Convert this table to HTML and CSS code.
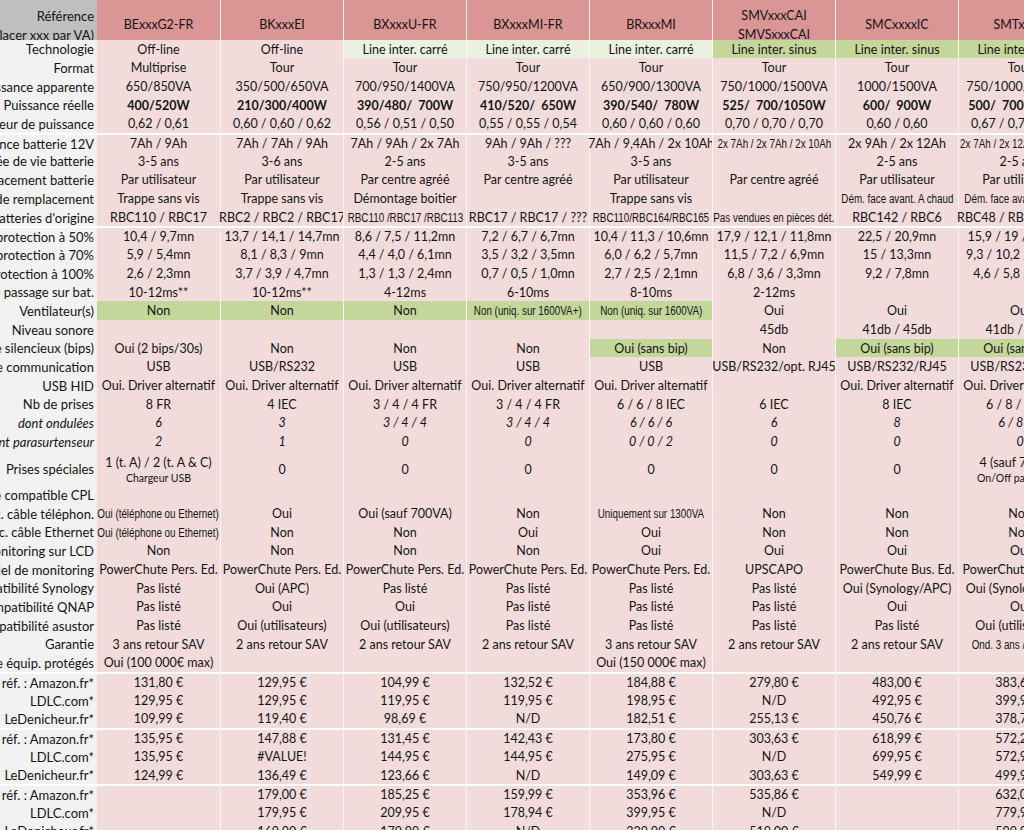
FILE: index.html
```html
<!DOCTYPE html>
<html lang="fr">
<head>
<meta charset="utf-8">
<title>Comparatif onduleurs APC</title>
<link rel="stylesheet" href="styles.css">
</head>
<body>
<div class="sheet">
  <div class="row head">
    <div class="lab"><span>Référence</span><span>(remplacer xxx par VA)</span></div>
    <div>BExxxG2-FR</div><div>BKxxxEI</div><div>BXxxxU-FR</div><div>BXxxxMI-FR</div><div>BRxxxMI</div>
    <div><span>SMVxxxCAI</span><span>SMVSxxxCAI</span></div><div>SMCxxxxIC</div><div>SMTxxxxI</div>
  </div>

  <div class="row">
    <div class="lab"><span>Technologie</span></div>
    <div>Off-line</div><div>Off-line</div><div class="lg">Line inter. carré</div><div class="lg">Line inter. carré</div><div class="lg">Line inter. carré</div><div class="g">Line inter. sinus</div><div class="g">Line inter. sinus</div><div class="g">Line inter. sinus</div>
  </div>
  <div class="row">
    <div class="lab"><span>Format</span></div>
    <div>Multiprise</div><div>Tour</div><div>Tour</div><div>Tour</div><div>Tour</div><div>Tour</div><div>Tour</div><div>Tour</div>
  </div>
  <div class="row">
    <div class="lab"><span>Puissance apparente</span></div>
    <div>650/850VA</div><div>350/500/650VA</div><div>700/950/1400VA</div><div>750/950/1200VA</div><div>650/900/1300VA</div><div>750/1000/1500VA</div><div>1000/1500VA</div><div>750/1000/1500VA</div>
  </div>
  <div class="row b">
    <div class="lab"><span>Puissance réelle</span></div>
    <div>400/520W</div><div>210/300/400W</div><div>390/480/  700W</div><div>410/520/  650W</div><div>390/540/  780W</div><div>525/  700/1050W</div><div>600/  900W</div><div>500/  700/1000W</div>
  </div>
  <div class="row">
    <div class="lab"><span>Facteur de puissance</span></div>
    <div>0,62 / 0,61</div><div>0,60 / 0,60 / 0,62</div><div>0,56 / 0,51 / 0,50</div><div>0,55 / 0,55 / 0,54</div><div>0,60 / 0,60 / 0,60</div><div>0,70 / 0,70 / 0,70</div><div>0,60 / 0,60</div><div>0,67 / 0,70 / 0,67</div>
  </div>

  <div class="row sep">
    <div class="lab"><span>Puissance batterie 12V</span></div>
    <div>7Ah / 9Ah</div><div>7Ah / 7Ah / 9Ah</div><div>7Ah / 9Ah / 2x 7Ah</div><div>9Ah / 9Ah / ???</div><div>7Ah / 9,4Ah / 2x 10Ah</div><div><span class="n">2x 7Ah / 2x 7Ah / 2x 10Ah</span></div><div>2x 9Ah / 2x 12Ah</div><div><span class="n">2x 7Ah / 2x 12Ah / 2x 12Ah</span></div>
  </div>
  <div class="row">
    <div class="lab"><span>Durée de vie batterie</span></div>
    <div>3-5 ans</div><div>3-6 ans</div><div>2-5 ans</div><div>3-5 ans</div><div>3-5 ans</div><div></div><div>2-5 ans</div><div>2-5 ans</div>
  </div>
  <div class="row">
    <div class="lab"><span>Remplacement batterie</span></div>
    <div>Par utilisateur</div><div>Par utilisateur</div><div>Par centre agréé</div><div>Par centre agréé</div><div>Par utilisateur</div><div>Par centre agréé</div><div>Par utilisateur</div><div>Par utilisateur</div>
  </div>
  <div class="row">
    <div class="lab"><span>Mode de remplacement</span></div>
    <div>Trappe sans vis</div><div>Trappe sans vis</div><div>Démontage boitier</div><div></div><div>Trappe sans vis</div><div></div><div><span class="n">Dém. face avant. A chaud</span></div><div><span class="n">Dém. face avant. A chaud</span></div>
  </div>
  <div class="row">
    <div class="lab"><span>Batteries d'origine</span></div>
    <div>RBC110 / RBC17</div><div>RBC2 / RBC2 / RBC17</div><div><span class="n">RBC110 /RBC17 /RBC113</span></div><div>RBC17 / RBC17 / ???</div><div><span class="n">RBC110/RBC164/RBC165</span></div><div><span class="n">Pas vendues en pièces dét.</span></div><div>RBC142 / RBC6</div><div>RBC48 / RBC6 / RBC7</div>
  </div>

  <div class="row sep">
    <div class="lab"><span>Autonomie protection à 50%</span></div>
    <div>10,4 / 9,7mn</div><div>13,7 / 14,1 / 14,7mn</div><div>8,6 / 7,5 / 11,2mn</div><div>7,2 / 6,7 / 6,7mn</div><div>10,4 / 11,3 / 10,6mn</div><div>17,9 / 12,1 / 11,8mn</div><div>22,5 / 20,9mn</div><div>15,9 / 19 / 19,9mn</div>
  </div>
  <div class="row">
    <div class="lab"><span>Autonomie protection à 70%</span></div>
    <div>5,9 / 5,4mn</div><div>8,1 / 8,3 / 9mn</div><div>4,4 / 4,0 / 6,1mn</div><div>3,5 / 3,2 / 3,5mn</div><div>6,0 / 6,2 / 5,7mn</div><div>11,5 / 7,2 / 6,9mn</div><div>15 / 13,3mn</div><div>9,3 / 10,2 / 10,6mn</div>
  </div>
  <div class="row">
    <div class="lab"><span>Autonomie protection à 100%</span></div>
    <div>2,6 / 2,3mn</div><div>3,7 / 3,9 / 4,7mn</div><div>1,3 / 1,3 / 2,4mn</div><div>0,7 / 0,5 / 1,0mn</div><div>2,7 / 2,5 / 2,1mn</div><div>6,8 / 3,6 / 3,3mn</div><div>9,2 / 7,8mn</div><div>4,6 / 5,8 / 5,7mn</div>
  </div>
  <div class="row">
    <div class="lab"><span>Temps de passage sur bat.</span></div>
    <div>10-12ms**</div><div>10-12ms**</div><div>4-12ms</div><div>6-10ms</div><div>8-10ms</div><div>2-12ms</div><div></div><div></div>
  </div>
  <div class="row">
    <div class="lab"><span>Ventilateur(s)</span></div>
    <div class="g">Non</div><div class="g">Non</div><div class="g">Non</div><div class="g"><span class="n">Non (uniq. sur 1600VA+)</span></div><div class="g"><span class="n">Non (uniq. sur 1600VA)</span></div><div>Oui</div><div>Oui</div><div>Oui</div>
  </div>
  <div class="row">
    <div class="lab"><span>Niveau sonore</span></div>
    <div></div><div></div><div></div><div></div><div></div><div>45db</div><div>41db / 45db</div><div>41db / 45db</div>
  </div>
  <div class="row">
    <div class="lab"><span>Mode silencieux (bips)</span></div>
    <div>Oui (2 bips/30s)</div><div>Non</div><div>Non</div><div>Non</div><div class="g">Oui (sans bip)</div><div>Non</div><div class="g">Oui (sans bip)</div><div class="g">Oui (sans bip)</div>
  </div>
  <div class="row">
    <div class="lab"><span>Port de communication</span></div>
    <div>USB</div><div>USB/RS232</div><div>USB</div><div>USB</div><div>USB</div><div>USB/RS232/opt. RJ45</div><div>USB/RS232/RJ45</div><div>USB/RS232/RJ45</div>
  </div>
  <div class="row">
    <div class="lab"><span>USB HID</span></div>
    <div>Oui. Driver alternatif</div><div>Oui. Driver alternatif</div><div>Oui. Driver alternatif</div><div>Oui. Driver alternatif</div><div>Oui. Driver alternatif</div><div></div><div>Oui. Driver alternatif</div><div>Oui. Driver alternatif</div>
  </div>
  <div class="row">
    <div class="lab"><span>Nb de prises</span></div>
    <div>8 FR</div><div>4 IEC</div><div>3 / 4 / 4 FR</div><div>3 / 4 / 4 FR</div><div>6 / 6 / 8 IEC</div><div>6 IEC</div><div>8 IEC</div><div>6 / 8 / 8 IEC</div>
  </div>
  <div class="row i">
    <div class="lab"><span>dont ondulées</span></div>
    <div>6</div><div>3</div><div>3 / 4 / 4</div><div>3 / 4 / 4</div><div>6 / 6 / 6</div><div>6</div><div>8</div><div>6 / 8 / 8</div>
  </div>
  <div class="row i">
    <div class="lab"><span>dont parasurtenseur</span></div>
    <div>2</div><div>1</div><div>0</div><div>0</div><div>0 / 0 / 2</div><div>0</div><div>0</div><div>0</div>
  </div>
  <div class="row tall">
    <div class="lab"><span>Prises spéciales</span></div>
    <div><span>1 (t. A) / 2 (t. A &amp; C)</span><span class="sm">Chargeur USB</span></div><div>0</div><div>0</div><div>0</div><div>0</div><div>0</div><div>0</div><div><span>4 (sauf 750VA)</span><span class="sm">On/Off par logiciel</span></div>
  </div>

  <div class="row">
    <div class="lab"><span>Prise compatible CPL</span></div>
    <div></div><div></div><div></div><div></div><div></div><div></div><div></div><div></div>
  </div>
  <div class="row">
    <div class="lab"><span>Protec. câble téléphon.</span></div>
    <div><span class="n">Oui (téléphone ou Ethernet)</span></div><div>Oui</div><div>Oui (sauf 700VA)</div><div>Non</div><div><span class="n">Uniquement sur 1300VA</span></div><div>Non</div><div>Non</div><div>Non</div>
  </div>
  <div class="row">
    <div class="lab"><span>Protec. câble Ethernet</span></div>
    <div><span class="n">Oui (téléphone ou Ethernet)</span></div><div>Non</div><div>Non</div><div>Oui</div><div>Oui</div><div>Non</div><div>Non</div><div>Non</div>
  </div>
  <div class="row">
    <div class="lab"><span>Monitoring sur LCD</span></div>
    <div>Non</div><div>Non</div><div>Non</div><div>Non</div><div>Oui</div><div>Oui</div><div>Oui</div><div>Oui</div>
  </div>
  <div class="row">
    <div class="lab"><span>Logiciel de monitoring</span></div>
    <div>PowerChute Pers. Ed.</div><div>PowerChute Pers. Ed.</div><div>PowerChute Pers. Ed.</div><div>PowerChute Pers. Ed.</div><div>PowerChute Pers. Ed.</div><div>UPSCAPO</div><div>PowerChute Bus. Ed.</div><div>PowerChute Bus. Ed.</div>
  </div>
  <div class="row">
    <div class="lab"><span>Compatibilité Synology</span></div>
    <div>Pas listé</div><div>Oui (APC)</div><div>Pas listé</div><div>Pas listé</div><div>Pas listé</div><div>Pas listé</div><div>Oui (Synology/APC)</div><div>Oui (Synology/APC)</div>
  </div>
  <div class="row">
    <div class="lab"><span>Compatibilité QNAP</span></div>
    <div>Pas listé</div><div>Oui</div><div>Oui</div><div>Pas listé</div><div>Pas listé</div><div>Pas listé</div><div>Oui</div><div>Oui</div>
  </div>
  <div class="row">
    <div class="lab"><span>Compatibilité asustor</span></div>
    <div>Pas listé</div><div>Oui (utilisateurs)</div><div>Oui (utilisateurs)</div><div>Pas listé</div><div>Pas listé</div><div>Pas listé</div><div>Pas listé</div><div>Oui (utilisateurs)</div>
  </div>
  <div class="row">
    <div class="lab"><span>Garantie</span></div>
    <div>3 ans retour SAV</div><div>2 ans retour SAV</div><div>2 ans retour SAV</div><div>2 ans retour SAV</div><div>3 ans retour SAV</div><div>2 ans retour SAV</div><div>2 ans retour SAV</div><div><span class="n">Ond. 3 ans /bat. 2 ans</span></div>
  </div>
  <div class="row">
    <div class="lab"><span>Assurance équip. protégés</span></div>
    <div>Oui (100 000€ max)</div><div></div><div></div><div></div><div>Oui (150 000€ max)</div><div></div><div></div><div></div>
  </div>

  <div class="row sep">
    <div class="lab"><span>Prix  réf. : Amazon.fr*</span></div>
    <div>131,80 €</div><div>129,95 €</div><div>104,99 €</div><div>132,52 €</div><div>184,88 €</div><div>279,80 €</div><div>483,00 €</div><div>383,60 €</div>
  </div>
  <div class="row">
    <div class="lab"><span>LDLC.com*</span></div>
    <div>129,95 €</div><div>129,95 €</div><div>119,95 €</div><div>119,95 €</div><div>198,95 €</div><div>N/D</div><div>492,95 €</div><div>399,95 €</div>
  </div>
  <div class="row">
    <div class="lab"><span>LeDenicheur.fr*</span></div>
    <div>109,99 €</div><div>119,40 €</div><div>98,69 €</div><div>N/D</div><div>182,51 €</div><div>255,13 €</div><div>450,76 €</div><div>378,70 €</div>
  </div>

  <div class="row sep">
    <div class="lab"><span>Prix  réf. : Amazon.fr*</span></div>
    <div>135,95 €</div><div>147,88 €</div><div>131,45 €</div><div>142,43 €</div><div>173,80 €</div><div>303,63 €</div><div>618,99 €</div><div>572,20 €</div>
  </div>
  <div class="row">
    <div class="lab"><span>LDLC.com*</span></div>
    <div>135,95 €</div><div>#VALUE!</div><div>144,95 €</div><div>144,95 €</div><div>275,95 €</div><div>N/D</div><div>699,95 €</div><div>572,95 €</div>
  </div>
  <div class="row">
    <div class="lab"><span>LeDenicheur.fr*</span></div>
    <div>124,99 €</div><div>136,49 €</div><div>123,66 €</div><div>N/D</div><div>149,09 €</div><div>303,63 €</div><div>549,99 €</div><div>499,90 €</div>
  </div>

  <div class="row sep">
    <div class="lab"><span>Prix  réf. : Amazon.fr*</span></div>
    <div></div><div>179,00 €</div><div>185,25 €</div><div>159,99 €</div><div>353,96 €</div><div>535,86 €</div><div></div><div>632,00 €</div>
  </div>
  <div class="row">
    <div class="lab"><span>LDLC.com*</span></div>
    <div></div><div>179,95 €</div><div>209,95 €</div><div>178,94 €</div><div>399,95 €</div><div>N/D</div><div></div><div>779,95 €</div>
  </div>
  <div class="row">
    <div class="lab"><span>LeDenicheur.fr*</span></div>
    <div></div><div>169,90 €</div><div>179,99 €</div><div>N/D</div><div>329,90 €</div><div>519,00 €</div><div></div><div>599,90 €</div>
  </div>
</div>
</body>
</html>
```

FILE: styles.css
```css
* {
  box-sizing: border-box;
}

html,
body {
  margin: 0;
  padding: 0;
}

body {
  width: 1024px;
  height: 830px;
  overflow: hidden;
  background: #ffffff;
  color: #141414;
  font-family: Lato, "Open Sans", "Liberation Sans", sans-serif;
  font-size: 12.5px;
}

.sheet {
  width: 1081px;
}

.row {
  display: grid;
  grid-template-columns: 97px repeat(8, 123px);
  height: 18.7px;
}

.row > div {
  display: flex;
  align-items: center;
  justify-content: center;
  padding-top: 2px;
  white-space: pre;
  line-height: 1;
  background: #f2dcdb;
  border-left: 1px solid #faf4f4;
}

.row > div:nth-child(2) {
  border-left: 0;
}

.row > .lab {
  justify-content: flex-end;
  overflow: hidden;
  padding-right: 3px;
  font-size: 13px;
  background: #f2f2f2;
  border-left: 0;
}

.lab span {
  flex-shrink: 0;
}

.row.head {
  height: 39.5px;
}

.row.head > div {
  flex-direction: column;
  padding-top: 7px;
  line-height: 18.5px;
  background: #da9694;
}

.row.head > .lab {
  justify-content: center;
  align-items: flex-end;
  background: #bfbfbf;
}

.row.sep > div {
  border-top: 2px solid #ffffff;
}

.row.tall {
  height: 34.5px;
}

.row.tall > div:not(.lab) {
  flex-direction: column;
  padding-top: 4px;
  line-height: 16px;
}

.row > .lg {
  background: #ebf1de;
}

.row > .g {
  background: #c4d79b;
}

.row.b > div:not(.lab) {
  font-weight: 700;
}

.row.i > div {
  font-style: italic;
}

.n {
  display: inline-block;
  font-family: "Liberation Sans", Arial, sans-serif;
  font-size: 12px;
  transform: scaleX(0.82);
}

.sm {
  font-size: 10.5px;
  line-height: 15px;
}
```
